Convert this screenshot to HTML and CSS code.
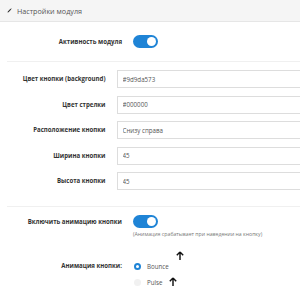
FILE: index.html
```html
<!DOCTYPE html>
<html lang="ru">
<head>
    <meta charset="UTF-8">
    <title>Настройки модуля</title>
    <link rel="stylesheet" href="styles.css">
</head>
<body>
    <div class="panel">
        <div class="panel-heading">
            <svg class="pencil" viewBox="0 0 10 10">
                <path d="M1 9 L1.6 6.8 L6.8 1.6 L8.4 3.2 L3.2 8.4 Z M7.4 1 L8 0.4 L9.6 2 L9 2.6 Z"/>
            </svg>
            <span>Настройки модуля</span>
        </div>

        <div class="panel-body">
            <div class="form-group group-status">
                <label>Активность модуля</label>
                <div class="control"><span class="toggle"></span></div>
            </div>

            <div class="form-group group-fields">
                <div class="row">
                    <label>Цвет кнопки (background)</label>
                    <div class="control"><input type="text" value="#9d9da573"></div>
                </div>
                <div class="row">
                    <label>Цвет стрелки</label>
                    <div class="control"><input type="text" value="#000000"></div>
                </div>
                <div class="row">
                    <label>Расположение кнопки</label>
                    <div class="control"><input type="text" value="Снизу справа"></div>
                </div>
                <div class="row">
                    <label>Ширина кнопки</label>
                    <div class="control"><input type="text" value="45"></div>
                </div>
                <div class="row">
                    <label>Высота кнопки</label>
                    <div class="control"><input type="text" value="45"></div>
                </div>
            </div>

            <div class="form-group group-anim">
                <label>Включить анимацию кнопки</label>
                <div class="control">
                    <span class="toggle"></span>
                    <p class="help">(Анимация срабатывает при наведении на кнопку)</p>
                </div>
            </div>

            <div class="form-group group-radio">
                <label>Анимация кнопки:</label>
                <div class="control radios">
                    <div class="radio">
                        <span class="dot checked"></span>
                        <span class="radio-text">Bounce</span>
                        <svg class="arrow arrow-up" viewBox="0 0 10 12"><path d="M5 1 L1 5 M5 1 L9 5 M5 1 L5 11"/></svg>
                    </div>
                    <div class="radio">
                        <span class="dot"></span>
                        <span class="radio-text">Pulse</span>
                        <svg class="arrow" viewBox="0 0 10 12"><path d="M5 1 L1 5 M5 1 L9 5 M5 1 L5 11"/></svg>
                    </div>
                </div>
            </div>
        </div>
    </div>
</body>
</html>
```

FILE: styles.css
```css
body {
    margin: 0;
    font-family: "Open Sans", Arial, sans-serif;
    background-color: white;
    color: #333;
    overflow: hidden;
}
.panel-heading {
    display: flex;
    align-items: center;
    gap: 5px;
    height: 21px;
    padding-left: 7px;
    background-color: #f5f5f5;
    border-bottom: 1px solid #e6e6e6;
    font-size: 7.2px;
    color: #555;
}
.pencil {
    width: 5px;
    height: 5px;
    fill: #333;
}
.panel-body {
    padding-left: 7px;
}
.form-group,
.row {
    display: grid;
    grid-template-columns: 115px 1fr;
    column-gap: 11px;
    align-items: center;
}
.form-group label,
.row label {
    text-align: right;
    font-weight: bold;
    font-size: 6.1px;
    line-height: 1.3;
    color: #333;
}
.control {
    font-size: 0;
}
.group-status {
    height: 39px;
    border-bottom: 1px solid #f0f0f0;
}
.group-fields {
    display: flex;
    flex-direction: column;
    gap: 7.6px;
    padding: 8px 0 16px;
    border-bottom: 1px solid #f0f0f0;
}
.control input {
    display: block;
    box-sizing: border-box;
    width: 200px;
    height: 18px;
    border: 1px solid #ddd;
    padding: 0 5px;
    font-family: "Open Sans", Arial, sans-serif;
    font-size: 6.2px;
    color: #555;
    outline: none;
}
.toggle {
    display: block;
    position: relative;
    width: 25px;
    height: 13px;
    border-radius: 7px;
    background-color: #1f84d6;
}
.toggle::after {
    content: "";
    position: absolute;
    right: 2px;
    top: 2px;
    width: 9px;
    height: 9px;
    border-radius: 50%;
    background-color: white;
}
.group-anim {
    padding-top: 8px;
    align-items: start;
}
.group-anim label {
    padding-top: 3px;
}
.help {
    margin: 2px 0 0;
    font-size: 5.2px;
    color: #777;
}
.group-radio {
    padding-top: 23px;
    align-items: start;
}
.group-radio label {
    padding-top: 1px;
}
.radios {
    display: flex;
    flex-direction: column;
    gap: 6px;
}
.radio {
    display: flex;
    align-items: center;
    gap: 6px;
    height: 10px;
}
.dot {
    box-sizing: border-box;
    width: 7px;
    height: 7px;
    border-radius: 50%;
    margin-left: 1px;
    background-color: #f1f1f1;
}
.dot.checked {
    border: 2px solid #1f84d6;
    background-color: white;
}
.radio-text {
    font-size: 6.2px;
    color: #555;
}
.arrow {
    width: 8px;
    height: 10px;
    fill: none;
    stroke: #111;
    stroke-width: 1.8;
}
.arrow-up {
    margin-left: 1px;
    transform: translateY(-10px);
}
```
